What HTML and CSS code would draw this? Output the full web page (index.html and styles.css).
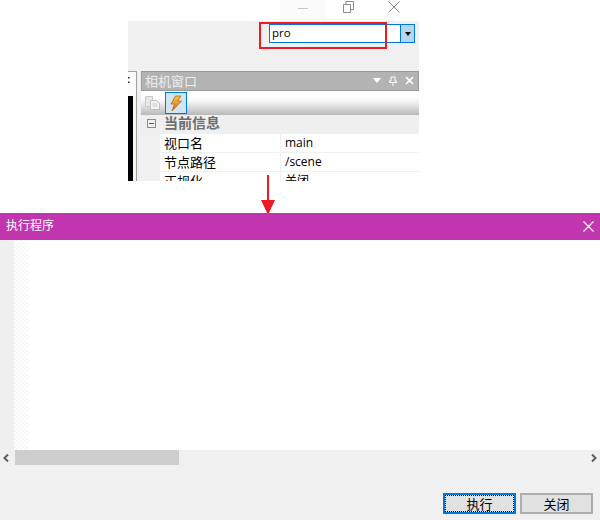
FILE: index.html
```html
<!DOCTYPE html>
<html lang="zh">
<head>
<meta charset="utf-8">
<title>执行程序</title>
<link rel="stylesheet" href="styles.css">
</head>
<body>
<div class="page">
  <section class="capture">
    <div class="winbar">
      <span class="win-btn win-min"><svg width="10" height="12" viewBox="0 0 10 12"><path d="M0 7.500H10" stroke="#c9c9c9" fill="none"/></svg></span>
      <span class="win-btn"><svg width="11" height="12" viewBox="0 0 11 12"><path d="M.5 3.500h7v8h-7zM3 3V.5h7.500v8H8" stroke="#8a8a8a" fill="none"/></svg></span>
      <span class="win-btn"><svg width="12" height="12" viewBox="0 0 12 12"><path d="M.5.500l11 11M11.500.500l-11 11" stroke="#8a8a8a" fill="none"/></svg></span>
    </div>
    <div class="app">
      <div class="combo-row">
        <div class="combo-input">pro</div>
        <div class="combo-drop"><span class="caret"></span></div>
      </div>
      <div class="app-main">
        <div class="left-strip">
          <div class="strip-tab">:</div>
          <div class="strip-black"></div>
        </div>
        <div class="panel">
          <div class="panel-head">
            <span class="panel-title">相机窗口</span>
            <span class="panel-tools">
              <span class="panel-caret"></span>
              <svg width="8" height="10" viewBox="0 0 8 10"><path d="M2 1h4v4h1.500v1.500H.5V5H2zM4 6.500V10" stroke="#fff" fill="none"/></svg>
              <svg width="9" height="9" viewBox="0 0 9 9"><path d="M1 1l7 7M8 1l-7 7" stroke="#fff" stroke-width="1.700" fill="none"/></svg>
            </span>
          </div>
          <div class="panel-toolbar">
            <span class="tool">
              <svg width="18" height="16" viewBox="0 0 18 16"><path d="M1.500 1.500h7v10h-7z" fill="#e8e8e8" stroke="#c8c8c8"/><path d="M6.500 5.500h6l3 3v6h-9z" fill="#f4f4f4" stroke="#bdbdbd"/><path d="M8.500 9h5M8.500 11h5" stroke="#c8c8c8"/></svg>
            </span>
            <span class="tool tool-on">
              <svg width="14" height="17" viewBox="0 0 14 17"><defs><linearGradient id="bolt" x1="0" y1="0" x2="0" y2="1"><stop offset="0" stop-color="#f7c531"/><stop offset="1" stop-color="#d9761c"/></linearGradient></defs><path d="M6.500 1H12L8.500 6H12.500L3 16 5.500 9H2z" fill="url(#bolt)" stroke="#b9651a" stroke-width=".8"/></svg>
            </span>
          </div>
          <div class="group-row">
            <span class="expander"></span>
            <span class="group-name">当前信息</span>
          </div>
          <div class="prop-row"><span class="prop-key">视口名</span><span class="prop-val">main</span></div>
          <div class="prop-row"><span class="prop-key">节点路径</span><span class="prop-val">/scene</span></div>
          <div class="prop-row"><span class="prop-key">正规化</span><span class="prop-val">关闭</span></div>
        </div>
      </div>
    </div>
    <div class="red-box"></div>
    <svg class="red-arrow" width="16" height="40" viewBox="0 0 16 40"><path d="M8 0V27" stroke="#ed1c24" stroke-width="2" fill="none"/><path d="M1 25H15L8 40z" fill="#ed1c24"/></svg>
  </section>
  <section class="dialog">
    <header class="dialog-title">
      <span class="dialog-name">执行程序</span>
      <svg width="11" height="11" viewBox="0 0 11 11"><path d="M.5.500l10 10M10.500.500l-10 10" stroke="#fff" stroke-width="1.200" fill="none"/></svg>
    </header>
    <div class="editor">
      <div class="gutter"></div>
      <div class="fold"></div>
      <div class="code"></div>
    </div>
    <div class="hscroll">
      <span class="arrow">
        <svg width="8" height="8" viewBox="0 0 8 8"><path d="M6 .500L2.500 4 6 7.500" stroke="#606060" stroke-width="2" fill="none"/></svg>
      </span>
      <div class="track"><div class="thumb"></div></div>
      <span class="arrow">
        <svg width="8" height="8" viewBox="0 0 8 8"><path d="M2 .500L5.500 4 2 7.500" stroke="#606060" stroke-width="2" fill="none"/></svg>
      </span>
    </div>
    <footer class="dialog-foot">
      <button class="btn btn-default"><span class="btn-focus">执行</span></button>
      <button class="btn">关闭</button>
    </footer>
  </section>
</div>
</body>
</html>
```
FILE: styles.css
```css
* { box-sizing: border-box; }
html, body { margin: 0; padding: 0; background: #fff; }
body { font-family: "Noto Sans CJK SC", "Noto Sans", sans-serif; }
.page { width: 600px; height: 520px; display: flex; flex-direction: column; overflow: hidden; }

.capture { position: relative; height: 213px; flex: none; background: #fff; padding-left: 128px; }
.winbar { height: 21px; width: 291px; display: flex; padding-left: 152px; }
.win-btn { width: 45.500px; display: flex; justify-content: center; padding-top: 1px; }
.win-min { background: #fbfbfb; }
.app { width: 291px; height: 160px; background: #f0f0f0; overflow: hidden; }
.combo-row { display: flex; height: 19px; margin: 3px 0 0 141px; }
.combo-input { width: 132px; height: 19px; border: 1px solid #0078d7; background: #fff; font: 11.500px/16px "Open Sans", sans-serif; padding-left: 2px; color: #000; }
.combo-drop { width: 14px; height: 19px; border: 1px solid #0078d7; border-left: 0; background: #b3d7f3; display: flex; align-items: center; justify-content: center; }
.caret { border: 3.500px solid transparent; border-top: 4px solid #000; border-bottom: 0; }

.app-main { display: flex; margin-top: 28px; gap: 4px; }
.left-strip { width: 9px; display: flex; flex-direction: column; background: #fff; border: 1px solid #a0a0a0; border-width: 1px 1px 0 0; }
.strip-tab { height: 24px; background: #fafafa; font: 700 10px/16px "Liberation Sans", sans-serif; color: #000; text-indent: -1px; overflow: hidden; }
.strip-black { flex: 1; background: #000; border-right: 3px solid #f7f7e6; }

.panel { flex: 1; min-width: 0; height: 110px; overflow: hidden; }
.panel-head { height: 20px; background: #b3b3b3; border: 1px solid #9a9a9a; display: flex; align-items: center; justify-content: space-between; padding: 0 4px 1px 3px; color: #e9e9e9; }
.panel-title { font-size: 13px; line-height: 17px; color: #ececec; }
.panel-tools { display: flex; align-items: center; gap: 8px; }
.panel-caret { border: 4px solid transparent; border-top: 5px solid #fff; border-bottom: 0; }
.panel-toolbar { height: 24px; display: flex; align-items: center; gap: 1px; padding-left: 1px; background: linear-gradient(#fff 25%, #f3f3f3 45%, #b8b8b8 100%); }
.tool { width: 22px; height: 22px; display: flex; align-items: center; justify-content: center; }
.tool-on { background: #cfe4f5; border: 1px solid #0078d7; }
.group-row { height: 19px; display: flex; align-items: center; background: #efefef; padding: 0 0 5px 6px; }
.expander { width: 9px; height: 9px; border: 1px solid #8c8c8c; position: relative; margin: 3px 8px 0 0; background: linear-gradient(#5a5a5a, #5a5a5a) center / 5px 1px no-repeat; }
.group-name { font-size: 14px; font-weight: 700; color: #6d6d6d; line-height: 16px; }
.prop-row { height: 19px; display: flex; margin-left: 19px; border-bottom: 1px solid #f0f0f0; background: #fff; font-size: 13px; line-height: 17px; color: #000; }
.prop-key { width: 121px; border-right: 1px solid #f0f0f0; padding-left: 4px; }
.prop-val { padding-left: 4px; font-size: 12px; font-family: "Open Sans", "Noto Sans CJK SC", sans-serif; }

.red-box { position: absolute; left: 259px; top: 22px; width: 128px; height: 27px; border: 2px solid #ed1c24; }
.red-arrow { position: absolute; left: 260px; top: 175px; }

.dialog { flex: 1; display: flex; flex-direction: column; min-height: 0; background: #f0f0f0; position: relative; }
.dialog-title { height: 27px; flex: none; background: #c136ae; color: #fff; display: flex; align-items: center; justify-content: space-between; padding: 0 6px; font-size: 12px; }
.dialog-name { line-height: 14px; margin-bottom: 3px; }
.editor { height: 210px; flex: none; display: flex; background: #fff; }
.gutter { width: 14px; background: #efefef; }
.fold { width: 15px; background: repeating-conic-gradient(#f7f7f7 0 25%, #fff 0 50%) 0 0 / 4px 4px; }
.code { flex: 1; }
.hscroll { height: 15px; flex: none; display: flex; background: #f0f0f0; }
.arrow { width: 12px; display: flex; align-items: center; justify-content: center; }
.track { flex: 1; margin-left: 3px; }
.thumb { width: 164px; height: 15px; background: #cdcdcd; }
.dialog-foot { flex: 1; display: flex; justify-content: flex-end; gap: 4px; padding: 28px 7px 6px 0; }
.btn { width: 73px; height: 21px; padding: 0; border: 2px solid #adadad; background: #e1e1e1; font: 13px/17px "Noto Sans CJK SC", sans-serif; color: #000; }
.btn-default { border-color: #0078d7; }
.btn-focus { display: block; height: 17px; border: 1px dotted #000; line-height: 15px; }
```
